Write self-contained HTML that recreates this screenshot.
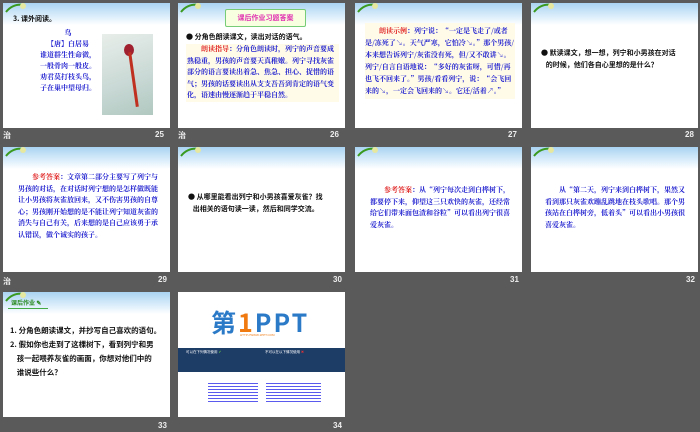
<!DOCTYPE html>
<html><head><meta charset="utf-8"><style>
body{margin:0;width:700px;height:432px;background:#5a5a5a;position:relative;overflow:hidden;font-family:"Liberation Sans","Noto Sans CJK SC",sans-serif}
.s{position:absolute;width:167px;height:125px;background:#fff;overflow:hidden}
.sky{position:absolute;left:0;top:0;width:100%;height:22px;background:linear-gradient(#a9d3f2,#e4f2fc 70%,#fff)}
.vine{position:absolute;left:2px;top:0;width:22px;height:10px}
.n{position:absolute;color:#eee;font-size:8px;font-weight:bold}
.t{position:absolute;font-size:7px;line-height:11px;font-weight:bold;color:#2020d0;font-family:"Noto Serif CJK SC","Noto Sans CJK SC",serif}
.k{color:#111;font-family:"Noto Sans CJK SC",sans-serif}
.r{color:#e02020}
</style></head><body>
<!-- row 1 -->
<div class="s" style="left:3px;top:3px"><div class="sky"></div><svg class="vine" viewBox="0 0 22 10"><path d="M1 9 Q8 0 20 2" stroke="#3a9a20" stroke-width="2" fill="none"/><circle cx="18" cy="3" r="3" fill="#e6e8a0"/></svg>
<div class="t k" style="left:10px;top:11px">3. 课外阅读。</div>
<div class="t" style="left:35px;top:25px;text-align:center;width:60px">鸟<br>【唐】白居易<br>谁道群生性命微，<br>一般骨肉一般皮。<br>劝君莫打枝头鸟，<br>子在巢中望母归。</div>
<div style="position:absolute;left:99px;top:31px;width:51px;height:81px;background:linear-gradient(160deg,#e8eeea,#c8d8d4 60%,#b0c8c0)"><div style="position:absolute;left:22px;top:10px;width:10px;height:12px;background:#a02030;border-radius:50%"></div><div style="position:absolute;left:30px;top:18px;width:3px;height:55px;background:#c03020;transform:rotate(-8deg)"></div></div>
</div>
<div class="s" style="left:178px;top:3px"><div class="sky"></div><svg class="vine" viewBox="0 0 22 10"><path d="M1 9 Q8 0 20 2" stroke="#3a9a20" stroke-width="2" fill="none"/><circle cx="18" cy="3" r="3" fill="#e6e8a0"/></svg>
<div style="position:absolute;left:47px;top:6px;width:79px;height:16px;border:1px solid #7c7;background:#f8ffe0;border-radius:2px;color:#e030b0;font-size:7px;font-weight:bold;text-align:center;line-height:16px;font-family:'Noto Sans CJK SC',sans-serif">课后作业习题答案</div>
<div class="t k" style="left:8px;top:29px">● 分角色朗读课文，读出对话的语气。</div>
<div class="t" style="left:8px;top:41px;width:152px;background:#fffbe8;padding-left:1px;line-height:11.5px">　　<span class="r">朗读指导</span>：分角色朗读时，列宁的声音要成熟稳重，男孩的声音要天真稚嫩。列宁寻找灰雀部分的语言要读出着急、焦急、担心、捉惜的语气；男孩的话要读出从支支吾吾到肯定的语气变化，语速由慢逐渐趋于平稳自然。</div>
</div>
<div class="s" style="left:355px;top:3px"><div class="sky"></div><svg class="vine" viewBox="0 0 22 10"><path d="M1 9 Q8 0 20 2" stroke="#3a9a20" stroke-width="2" fill="none"/><circle cx="18" cy="3" r="3" fill="#e6e8a0"/></svg>
<div class="t" style="left:10px;top:20px;width:150px;background:#fffbe8;line-height:12px;padding:2px 0">　　<span class="r">朗读示例</span>：列宁说：“一定是飞走了/或者是/冻死了↘。天气严寒，它怕冷↘。”那个男孩/本来想告诉列宁/灰雀没有死，但/又不敢讲↘。列宁/自言自语地说：“多好的灰雀呀，可惜/再也飞不回来了。”男孩/看看列宁，说：“会飞回来的↘，一定会飞回来的↘。它还/活着↗。”</div>
</div>
<div class="s" style="left:531px;top:3px"><div class="sky"></div><svg class="vine" viewBox="0 0 22 10"><path d="M1 9 Q8 0 20 2" stroke="#3a9a20" stroke-width="2" fill="none"/><circle cx="18" cy="3" r="3" fill="#e6e8a0"/></svg>
<div class="t k" style="left:10px;top:44px;width:150px;line-height:12px">● 默读课文，想一想，列宁和小男孩在对话<br>&nbsp;&nbsp;&nbsp;的时候，他们各自心里想的是什么？</div>
</div>
<div class="n" style="left:3px;top:130px">治</div><div class="n" style="left:155px;top:130px">25</div>
<div class="n" style="left:178px;top:130px">治</div><div class="n" style="left:330px;top:130px">26</div>
<div class="n" style="left:508px;top:130px">27</div><div class="n" style="left:685px;top:130px">28</div>
<!-- row 2 -->
<div class="s" style="left:3px;top:147px"><div class="sky"></div><svg class="vine" viewBox="0 0 22 10"><path d="M1 9 Q8 0 20 2" stroke="#3a9a20" stroke-width="2" fill="none"/><circle cx="18" cy="3" r="3" fill="#e6e8a0"/></svg>
<div class="t" style="left:15px;top:25px;width:145px;line-height:11.5px">　　<span class="r">参考答案</span>：文章第二部分主要写了列宁与男孩的对话，在对话时列宁想的是怎样做既能让小男孩将灰雀放回来，又不伤害男孩的自尊心；男孩刚开始想的是不能让列宁知道灰雀的消失与自己有关，后来想的是自己应该勇于承认错误，做个诚实的孩子。</div>
</div>
<div class="s" style="left:178px;top:147px"><div class="sky"></div><svg class="vine" viewBox="0 0 22 10"><path d="M1 9 Q8 0 20 2" stroke="#3a9a20" stroke-width="2" fill="none"/><circle cx="18" cy="3" r="3" fill="#e6e8a0"/></svg>
<div class="t k" style="left:10px;top:44px;width:152px;line-height:12px">● 从哪里能看出列宁和小男孩喜爱灰雀？找<br>&nbsp;&nbsp;&nbsp;出相关的语句读一读，然后和同学交流。</div>
</div>
<div class="s" style="left:355px;top:147px"><div class="sky"></div><svg class="vine" viewBox="0 0 22 10"><path d="M1 9 Q8 0 20 2" stroke="#3a9a20" stroke-width="2" fill="none"/><circle cx="18" cy="3" r="3" fill="#e6e8a0"/></svg>
<div class="t" style="left:15px;top:38px;width:145px;line-height:11.5px">　　<span class="r">参考答案</span>：从“列宁每次走到白桦树下，都要停下来，仰望这三只欢快的灰雀，还经常给它们带来面包渣和谷粒”可以看出列宁很喜爱灰雀。</div>
</div>
<div class="s" style="left:531px;top:147px"><div class="sky"></div><svg class="vine" viewBox="0 0 22 10"><path d="M1 9 Q8 0 20 2" stroke="#3a9a20" stroke-width="2" fill="none"/><circle cx="18" cy="3" r="3" fill="#e6e8a0"/></svg>
<div class="t" style="left:14px;top:38px;width:145px;line-height:11.5px">　　从“第二天，列宁来到白桦树下，果然又看到那只灰雀欢蹦乱跳地在枝头歌唱。那个男孩站在白桦树旁，低着头”可以看出小男孩很喜爱灰雀。</div>
</div>
<div class="n" style="left:3px;top:276px">治</div><div class="n" style="left:158px;top:275px">29</div>
<div class="n" style="left:333px;top:275px">30</div>
<div class="n" style="left:510px;top:275px">31</div><div class="n" style="left:686px;top:275px">32</div>
<!-- row 3 -->
<div class="s" style="left:3px;top:292px"><div class="sky"></div><svg class="vine" viewBox="0 0 22 10"><path d="M1 9 Q8 0 20 2" stroke="#3a9a20" stroke-width="2" fill="none"/><circle cx="18" cy="3" r="3" fill="#e6e8a0"/></svg>
<div style="position:absolute;left:8px;top:6px;font-size:6px;font-weight:bold;color:#2a8a20;font-family:'Noto Sans CJK SC',sans-serif">课后作业 ✎</div>
<div style="position:absolute;left:5px;top:16px;width:40px;height:1px;background:#4a4"></div>
<div class="t k" style="left:7px;top:32px;width:158px;line-height:14px;font-size:7.5px">1. 分角色朗读课文，并抄写自己喜欢的语句。<br>2. 假如你也走到了这棵树下，看到列宁和男<br>&nbsp;&nbsp;&nbsp;&nbsp;孩一起喂养灰雀的画面，你想对他们中的<br>&nbsp;&nbsp;&nbsp;&nbsp;谁说些什么？</div>
</div>
<div class="s" style="left:178px;top:292px">
<div style="position:absolute;left:33px;top:16px;font-size:25px;line-height:28px;font-weight:bold;color:#2a7ac8;letter-spacing:2px;font-family:'Noto Sans CJK SC',sans-serif">第<span style="color:#f07a10">1</span>PPT</div>
<div style="position:absolute;left:62px;top:41px;font-size:3px;color:#f07a10">HTTP://WWW.1PPT.COM</div>
<div style="position:absolute;left:0;top:56px;width:167px;height:24px;background:#1d3c66"></div>
<div style="position:absolute;left:8px;top:58px;font-size:3.5px;color:#fff">可以在下列情况使用 <span style="color:#6c4">✔</span></div>
<div style="position:absolute;left:87px;top:58px;font-size:3.5px;color:#fff">不可以在以下情况使用 <span style="color:#e33">✖</span></div>
<div style="position:absolute;left:30px;top:90px;width:50px;height:22px;background:repeating-linear-gradient(#fff 0 1px,#5a5aee 1px 2px,#fff 2px 3px)"></div>
<div style="position:absolute;left:88px;top:90px;width:55px;height:22px;background:repeating-linear-gradient(#fff 0 1px,#5a5aee 1px 2px,#fff 2px 3px)"></div>
</div>
<div class="n" style="left:158px;top:421px">33</div><div class="n" style="left:333px;top:421px">34</div>
</body></html>
